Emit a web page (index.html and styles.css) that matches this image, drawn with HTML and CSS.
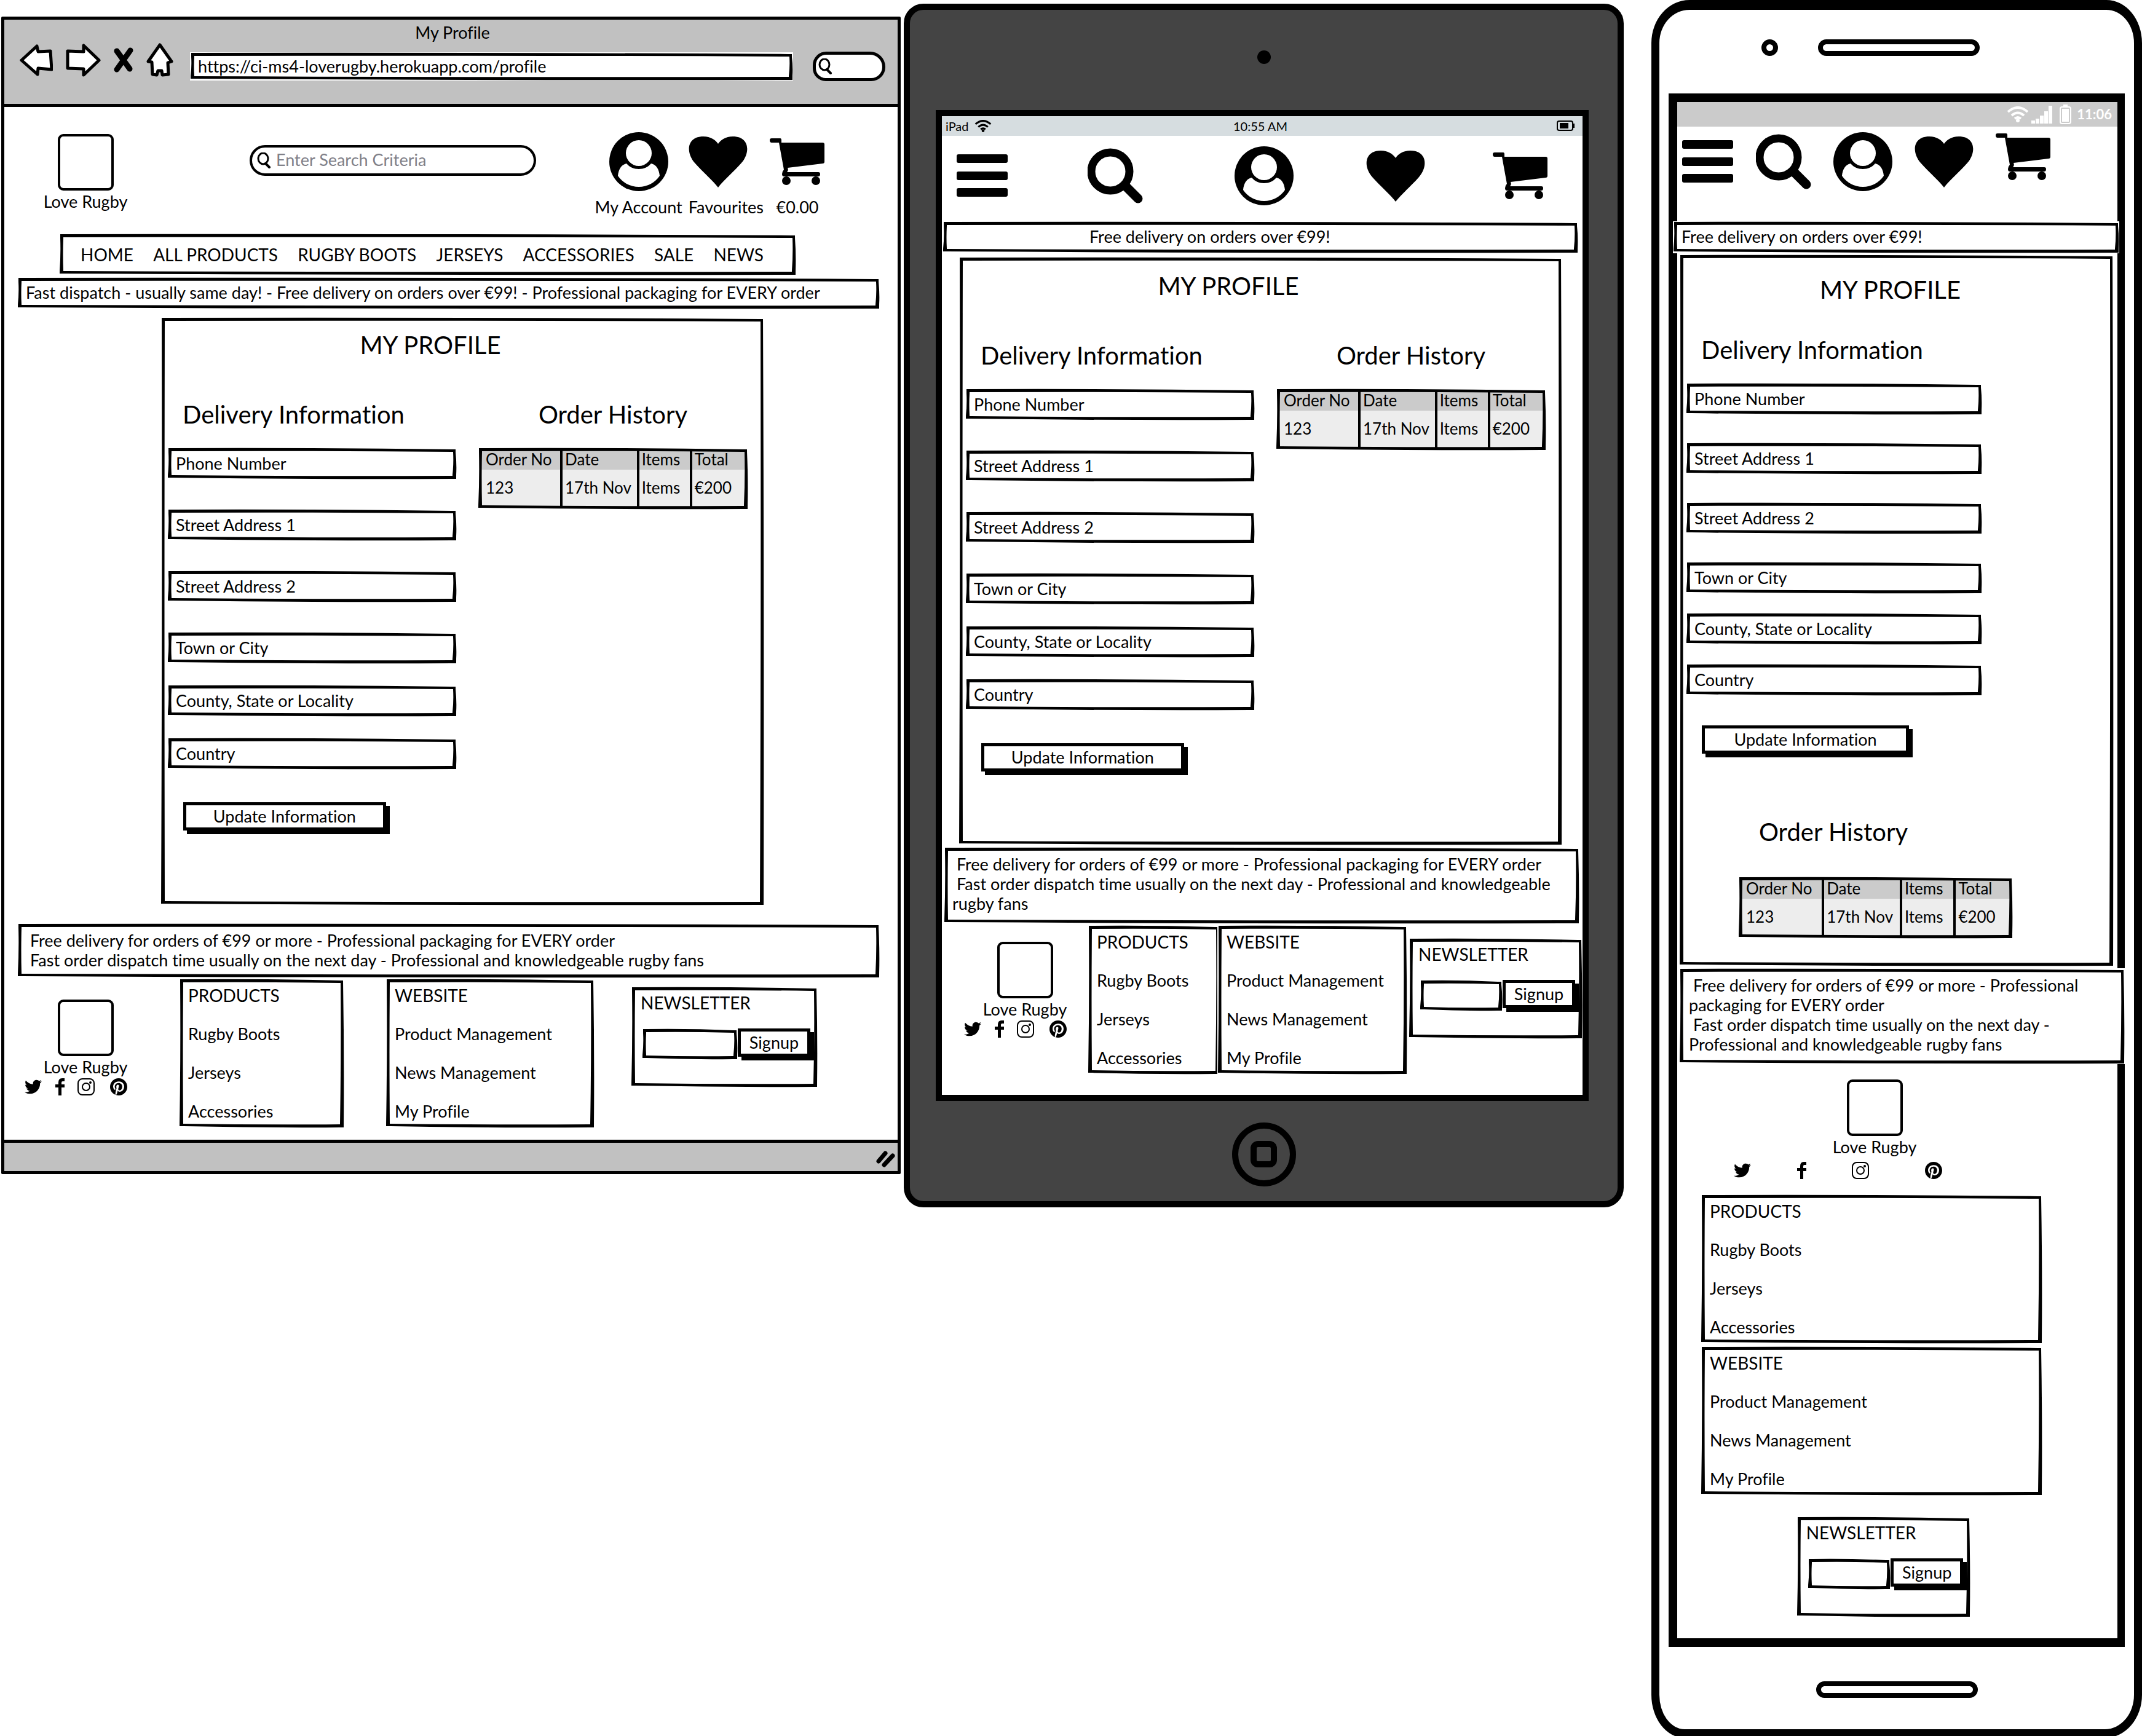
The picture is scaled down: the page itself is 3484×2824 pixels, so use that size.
FILE: index.html
```html
<!DOCTYPE html>
<html lang="en">
<head>
<meta charset="utf-8">
<title>Love Rugby - My Profile</title>
<link rel="stylesheet" href="styles.css">
</head>
<body>
<svg class="sprite" aria-hidden="true">
  <symbol id="i-account" viewBox="0 0 96 96"><circle cx="48" cy="48" r="48"/><circle cx="48" cy="34" r="21" fill="#fff"/><path fill="#fff" d="M28 51C19 53 15 61 14 71A41 41 0 0 0 82 71C81 61 77 53 68 51C63 57 56 60 48 60C40 60 33 57 28 51Z"/></symbol>
  <symbol id="i-heart" viewBox="0 0 96 83"><path d="M48 83C40 72 23 58 10 43C-5 26-3 0 24 0C36 0 44 6 48 12C52 6 60 0 72 0C99 0 101 26 86 43C73 58 56 72 48 83Z"/></symbol>
  <symbol id="i-cart" viewBox="0 0 90 76"><path d="M3 0H17Q19 0 19 3V7H86Q89 7 89 10V38Q89 41 86 41L29 48Q31 52 28 55H79Q82 55 82 58Q82 62 79 62H23Q20 62 20 58Q20 54 23 51L15 7H3Q0 7 0 3Q0 0 3 0Z"/><circle cx="27" cy="69" r="7"/><circle cx="75" cy="69" r="7"/></symbol>
  <symbol id="i-search" viewBox="0 0 90 90"><circle cx="37" cy="38" r="31" fill="none" stroke="#000" stroke-width="13"/><path d="M62 62L82 82" stroke="#000" stroke-width="15" stroke-linecap="round"/></symbol>
  <symbol id="i-menu" viewBox="0 0 84 70"><rect width="83" height="14" rx="3"/><rect y="28" width="83" height="14" rx="3"/><rect y="55" width="83" height="14" rx="3"/></symbol>
  <symbol id="i-find" viewBox="0 0 24 26"><ellipse cx="11" cy="10" rx="8" ry="9" fill="none" stroke="#000" stroke-width="3"/><path d="M15 18L21 24" stroke="#000" stroke-width="4" stroke-linecap="round"/></symbol>
  <symbol id="i-wifi" viewBox="0 0 36 26"><g fill="none" stroke="currentColor" stroke-width="4"><path d="M2 9Q18-5 34 9"/><path d="M8 15Q18 6 28 15"/><path d="M13 20Q18 16 23 20"/></g><circle cx="18" cy="23" r="3" fill="currentColor"/></symbol>
  <symbol id="i-twitter" viewBox="0 0 512 512"><path d="M459.37 151.716c.325 4.548.325 9.097.325 13.645 0 138.72-105.583 298.558-298.558 298.558-59.452 0-114.68-17.219-161.137-47.106 8.447.974 16.568 1.299 25.34 1.299 49.055 0 94.213-16.568 130.274-44.832-46.132-.975-84.792-31.188-98.112-72.772 6.498.974 12.995 1.624 19.818 1.624 9.421 0 18.843-1.3 27.614-3.573-48.081-9.747-84.143-51.98-84.143-102.985v-1.299c13.969 7.797 30.214 12.67 47.431 13.319-28.264-18.843-46.781-51.005-46.781-87.391 0-19.492 5.197-37.36 14.294-52.954 51.655 63.675 129.3 105.258 216.365 109.807-1.624-7.797-2.599-15.918-2.599-24.04 0-57.828 46.782-104.934 104.934-104.934 30.213 0 57.502 12.67 76.67 33.137 23.715-4.548 46.456-13.32 66.599-25.34-7.798 24.366-24.366 44.833-46.132 57.827 21.117-2.273 41.584-8.122 60.426-16.243-14.292 20.791-32.161 39.308-52.628 54.253z"/></symbol>
  <symbol id="i-facebook" viewBox="0 0 20 28"><path d="M13 28H8V15H3V10H8V7Q8 0 14 0H18V5H15Q13 5 13 7V10H18V15H13Z"/></symbol>
  <symbol id="i-instagram" viewBox="0 0 28 28"><g fill="none" stroke="#000" stroke-width="2"><rect x="1" y="1" width="26" height="26" rx="7"/><circle cx="14" cy="14" r="6"/></g><circle cx="21" cy="7" r="2"/></symbol>
  <symbol id="i-pinterest" viewBox="0 8 496 496"><path d="M496 256c0 137-111 248-248 248-25.6 0-50.2-3.9-73.4-11.1 10.1-16.5 25.2-43.5 30.8-65 3-11.6 15.4-59 15.4-59 8.1 15.4 31.7 28.5 56.8 28.5 74.8 0 128.7-68.8 128.7-154.3 0-81.9-66.9-143.2-152.9-143.2-107 0-163.9 71.8-163.9 150.1 0 36.4 19.4 81.7 50.3 96.1 4.7 2.2 7.2 1.2 8.3-3.3.8-3.4 5-20.3 6.9-28.1.6-2.5.3-4.7-1.7-7.1-10.1-12.5-18.3-35.3-18.3-56.6 0-54.7 41.4-107.6 112-107.6 60.9 0 103.6 41.5 103.6 100.9 0 67.1-33.9 113.6-78 113.6-24.3 0-42.6-20.1-36.7-44.8 7-29.5 20.5-61.3 20.5-82.6 0-19-10.2-34.9-31.4-34.9-24.9 0-44.9 25.7-44.9 60.2 0 22 7.4 36.8 7.4 36.8s-24.5 103.8-29 123.2c-5 21.4-3 51.6-.9 71.2C65.4 450.9 0 361.1 0 256 0 119 111 8 248 8s248 111 248 248z"/></symbol>
</svg>

<main class="board">

<!-- Desktop -->
<section class="browser">
  <header class="chrome">
    <div class="chrome-title">My Profile</div>
    <div class="toolbar">
      <div class="tools">
        <button type="button" aria-label="Back"><svg width="54" height="52" viewBox="0 0 54 52"><path class="arrow" d="M3 26L28 3L30 12L50 11L52 41L30 39L29 49Z"/></svg></button>
        <button type="button" aria-label="Forward"><svg width="58" height="54" viewBox="0 0 58 54"><path class="arrow" d="M55 27L30 3L30 13L4 12L4 40L30 41L30 51Z"/></svg></button>
        <button type="button" aria-label="Stop"><svg width="34" height="42" viewBox="0 0 34 42"><path d="M6 6L27 35M28 5L6 36" fill="none" stroke="#000" stroke-width="9" stroke-linecap="round"/></svg></button>
        <button type="button" aria-label="Home"><svg width="44" height="56" viewBox="0 0 44 56"><path class="arrow" d="M22 3L41 30L35 32L36 51L26 52L25 45L19 45L17 52L10 51L9 31L3 30Z"/></svg></button>
      </div>
      <input class="sketch url" type="text" aria-label="Address" value="https://ci-ms4-loverugby.herokuapp.com/profile">
      <div class="chrome-find"><svg width="24" height="26"><use href="#i-find"/></svg><input type="search" aria-label="Web search"></div>
    </div>
  </header>

  <div class="site-head">
    <a class="brand" href="#"><span class="logo"></span>Love Rugby</a>
    <label class="site-search"><svg width="24" height="26"><use href="#i-find"/></svg><input type="text" aria-label="Search" placeholder="Enter Search Criteria"></label>
    <div class="actions">
      <a href="#"><span class="pic"><svg width="96" height="96"><use href="#i-account"/></svg></span>My Account</a>
      <a class="to-left" href="#"><span class="pic"><svg width="96" height="83"><use href="#i-heart"/></svg></span>Favourites</a>
      <a href="#"><span class="pic"><svg width="90" height="76"><use href="#i-cart"/></svg></span>€0.00</a>
    </div>
  </div>

  <nav class="sketch nav">
    <a href="#">HOME</a><a href="#">ALL PRODUCTS</a><a href="#">RUGBY BOOTS</a><a href="#">JERSEYS</a><a href="#">ACCESSORIES</a><a href="#">SALE</a><a href="#">NEWS</a>
  </nav>
  <div class="sketch banner">Fast dispatch - usually same day! - Free delivery on orders over €99! - Professional packaging for EVERY order</div>

  <div class="sketch profile">
    <h1>MY PROFILE</h1>
    <div class="columns">
      <form class="delivery">
        <h2>Delivery Information</h2>
        <div class="fields">
          <input class="sketch" type="text" aria-label="Phone Number" placeholder="Phone Number">
          <input class="sketch" type="text" aria-label="Street Address 1" placeholder="Street Address 1">
          <input class="sketch" type="text" aria-label="Street Address 2" placeholder="Street Address 2">
          <input class="sketch" type="text" aria-label="Town or City" placeholder="Town or City">
          <input class="sketch" type="text" aria-label="County, State or Locality" placeholder="County, State or Locality">
          <input class="sketch" type="text" aria-label="Country" placeholder="Country">
        </div>
        <button class="press update" type="button">Update Information</button>
      </form>
      <div class="history">
        <h2>Order History</h2>
        <table class="sketch">
          <thead><tr><th class="c1">Order No</th><th class="c2">Date</th><th class="c3">Items</th><th>Total</th></tr></thead>
          <tbody><tr><td>123</td><td>17th Nov</td><td>Items</td><td>€200</td></tr></tbody>
        </table>
      </div>
    </div>
  </div>

  <div class="sketch promo"> Free delivery for orders of €99 or more - Professional packaging for EVERY order
 Fast order dispatch time usually on the next day - Professional and knowledgeable rugby fans</div>

  <footer class="foot">
    <div class="foot-brand">
      <a class="brand" href="#"><span class="logo"></span>Love Rugby</a>
      <div class="social">
        <a href="#" aria-label="Twitter"><svg width="28" height="28"><use href="#i-twitter"/></svg></a>
        <a href="#" aria-label="Facebook"><svg width="20" height="28"><use href="#i-facebook"/></svg></a>
        <a href="#" aria-label="Instagram"><svg width="28" height="28"><use href="#i-instagram"/></svg></a>
        <a href="#" aria-label="Pinterest"><svg width="28" height="28"><use href="#i-pinterest"/></svg></a>
      </div>
    </div>
    <div class="sketch links products"><h3>PRODUCTS</h3><a href="#">Rugby Boots</a><a href="#">Jerseys</a><a href="#">Accessories</a></div>
    <div class="sketch links website"><h3>WEBSITE</h3><a href="#">Product Management</a><a href="#">News Management</a><a href="#">My Profile</a></div>
    <form class="sketch newsletter"><h3>NEWSLETTER</h3><div class="signup"><input class="sketch" type="email" aria-label="Newsletter email"><button class="press" type="button">Signup</button></div></form>
  </footer>
  <div class="statusbar"><svg width="32" height="28" viewBox="0 0 32 28"><path d="M5 18L16 5M14 24L28 9" stroke="#000" stroke-width="7" stroke-linecap="round"/></svg></div>
</section>

<!-- Tablet -->
<section class="tablet">
  <div class="tablet-top"><span class="camera"></span></div>
  <div class="tablet-screen">
    <div class="tablet-status">
      <span class="carrier">iPad <svg width="28" height="20"><use href="#i-wifi"/></svg></span>
      <span>10:55 AM</span>
      <svg class="battery" width="30" height="18" viewBox="0 0 30 18"><rect x="1" y="1" width="25" height="15" rx="3" fill="none" stroke="#000" stroke-width="2"/><rect x="5" y="4" width="14" height="9"/><path d="M28 5V12" stroke="#000" stroke-width="2"/></svg>
    </div>
    <nav class="icons">
      <a href="#" aria-label="Menu"><svg width="84" height="70"><use href="#i-menu"/></svg></a>
      <a href="#" aria-label="Search"><svg width="90" height="90"><use href="#i-search"/></svg></a>
      <a href="#" aria-label="My Account"><svg width="96" height="96"><use href="#i-account"/></svg></a>
      <a href="#" aria-label="Favourites"><svg width="96" height="83"><use href="#i-heart"/></svg></a>
      <a href="#" aria-label="Basket"><svg width="90" height="76"><use href="#i-cart"/></svg></a>
    </nav>
    <div class="sketch banner">Free delivery on orders over €99!</div>

    <div class="sketch profile">
      <h1>MY PROFILE</h1>
      <div class="columns">
        <form class="delivery">
          <h2>Delivery Information</h2>
          <div class="fields">
            <input class="sketch" type="text" aria-label="Phone Number" placeholder="Phone Number">
            <input class="sketch" type="text" aria-label="Street Address 1" placeholder="Street Address 1">
            <input class="sketch" type="text" aria-label="Street Address 2" placeholder="Street Address 2">
            <input class="sketch" type="text" aria-label="Town or City" placeholder="Town or City">
            <input class="sketch" type="text" aria-label="County, State or Locality" placeholder="County, State or Locality">
            <input class="sketch" type="text" aria-label="Country" placeholder="Country">
          </div>
          <button class="press update" type="button">Update Information</button>
        </form>
        <div class="history">
          <h2>Order History</h2>
          <table class="sketch">
            <thead><tr><th class="c1">Order No</th><th class="c2">Date</th><th class="c3">Items</th><th>Total</th></tr></thead>
            <tbody><tr><td>123</td><td>17th Nov</td><td>Items</td><td>€200</td></tr></tbody>
          </table>
        </div>
      </div>
    </div>

    <div class="sketch promo"> Free delivery for orders of €99 or more - Professional packaging for EVERY order
 Fast order dispatch time usually on the next day - Professional and knowledgeable rugby fans</div>

    <footer class="foot">
      <div class="foot-brand">
        <a class="brand" href="#"><span class="logo"></span>Love Rugby</a>
        <div class="social">
          <a href="#" aria-label="Twitter"><svg width="28" height="28"><use href="#i-twitter"/></svg></a>
          <a href="#" aria-label="Facebook"><svg width="20" height="28"><use href="#i-facebook"/></svg></a>
          <a href="#" aria-label="Instagram"><svg width="28" height="28"><use href="#i-instagram"/></svg></a>
          <a href="#" aria-label="Pinterest"><svg width="28" height="28"><use href="#i-pinterest"/></svg></a>
        </div>
      </div>
      <div class="sketch links products"><h3>PRODUCTS</h3><a href="#">Rugby Boots</a><a href="#">Jerseys</a><a href="#">Accessories</a></div>
      <div class="sketch links website"><h3>WEBSITE</h3><a href="#">Product Management</a><a href="#">News Management</a><a href="#">My Profile</a></div>
      <form class="sketch newsletter"><h3>NEWSLETTER</h3><div class="signup"><input class="sketch" type="email" aria-label="Newsletter email"><button class="press" type="button">Signup</button></div></form>
    </footer>
  </div>
  <div class="tablet-bottom"><button class="home" type="button" aria-label="Home"><span></span></button></div>
</section>

<!-- Phone -->
<section class="phone">
  <div class="phone-top"><span class="lens"></span><span class="speaker"></span></div>
  <div class="phone-screen">
    <div class="phone-status">
      <svg width="36" height="26"><use href="#i-wifi"/></svg>
      <svg width="34" height="30" viewBox="0 0 34 30" fill="#fff"><path d="M0 25h6v5H0zM7 22h6v8H7zM14 17h6v13h-6zM21 10h6v20h-6zM28 1h6v29h-6z"/></svg>
      <svg class="cell" width="20" height="32" viewBox="0 0 20 32"><rect x="1" y="4" width="17" height="27" rx="3" fill="none" stroke="#fff" stroke-width="2"/><rect x="4" y="7" width="11" height="21" fill="#fff"/><rect x="6" width="7" height="4" fill="#fff"/></svg>
      <span>11:06</span>
    </div>
    <nav class="icons">
      <a href="#" aria-label="Menu"><svg width="84" height="70"><use href="#i-menu"/></svg></a>
      <a href="#" aria-label="Search"><svg width="90" height="90"><use href="#i-search"/></svg></a>
      <a href="#" aria-label="My Account"><svg width="96" height="96"><use href="#i-account"/></svg></a>
      <a href="#" aria-label="Favourites"><svg width="96" height="83"><use href="#i-heart"/></svg></a>
      <a class="raised" href="#" aria-label="Basket"><svg width="90" height="76"><use href="#i-cart"/></svg></a>
    </nav>
    <div class="sketch banner">Free delivery on orders over €99!</div>

    <div class="sketch profile">
      <h1>MY PROFILE</h1>
      <div class="columns">
        <form class="delivery">
          <h2>Delivery Information</h2>
          <div class="fields">
            <input class="sketch" type="text" aria-label="Phone Number" placeholder="Phone Number">
            <input class="sketch" type="text" aria-label="Street Address 1" placeholder="Street Address 1">
            <input class="sketch" type="text" aria-label="Street Address 2" placeholder="Street Address 2">
            <input class="sketch" type="text" aria-label="Town or City" placeholder="Town or City">
            <input class="sketch" type="text" aria-label="County, State or Locality" placeholder="County, State or Locality">
            <input class="sketch" type="text" aria-label="Country" placeholder="Country">
          </div>
          <button class="press update" type="button">Update Information</button>
        </form>
        <div class="history">
          <h2>Order History</h2>
          <table class="sketch">
            <thead><tr><th class="c1">Order No</th><th class="c2">Date</th><th class="c3">Items</th><th>Total</th></tr></thead>
            <tbody><tr><td>123</td><td>17th Nov</td><td>Items</td><td>€200</td></tr></tbody>
          </table>
        </div>
      </div>
    </div>

    <div class="sketch promo"> Free delivery for orders of €99 or more - Professional packaging for EVERY order
 Fast order dispatch time usually on the next day - Professional and knowledgeable rugby fans</div>

    <footer class="foot">
      <div class="foot-brand">
        <a class="brand" href="#"><span class="logo"></span>Love Rugby</a>
        <div class="social">
          <a href="#" aria-label="Twitter"><svg width="28" height="28"><use href="#i-twitter"/></svg></a>
          <a href="#" aria-label="Facebook"><svg width="20" height="28"><use href="#i-facebook"/></svg></a>
          <a href="#" aria-label="Instagram"><svg width="28" height="28"><use href="#i-instagram"/></svg></a>
          <a href="#" aria-label="Pinterest"><svg width="28" height="28"><use href="#i-pinterest"/></svg></a>
        </div>
      </div>
      <div class="sketch links products"><h3>PRODUCTS</h3><a href="#">Rugby Boots</a><a href="#">Jerseys</a><a href="#">Accessories</a></div>
      <div class="sketch links website"><h3>WEBSITE</h3><a href="#">Product Management</a><a href="#">News Management</a><a href="#">My Profile</a></div>
      <form class="sketch newsletter"><h3>NEWSLETTER</h3><div class="signup"><input class="sketch" type="email" aria-label="Newsletter email"><button class="press" type="button">Signup</button></div></form>
    </footer>
  </div>
  <div class="phone-bottom"><span class="speaker"></span></div>
</section>

</main>
</body>
</html>
```
FILE: styles.css
```css
* { box-sizing: border-box; }

body {
  margin: 0;
  background: #fff;
  color: #000;
  font: 27px/32px Lato, "Liberation Sans", sans-serif;
  font-variant-ligatures: none;
}

a { color: inherit; text-decoration: none; }
h1, h2, h3 { margin: 0; font-weight: 400; }
h1, h2 { font-size: 40px; line-height: 48px; }
h3 { font-size: 28px; line-height: 32px; }
svg { display: block; flex: none; }
.sprite { position: absolute; width: 0; height: 0; }

input, button {
  min-width: 0;
  margin: 0;
  padding: 0;
  border: 0;
  background: none;
  color: inherit;
  font: inherit;
}
input::placeholder { color: #000; opacity: 1; }

/* Hand-drawn outline shared by boxes, fields and tables */
.sketch {
  border: 8px solid #000;
  border-image: url("data:image/svg+xml,%3Csvg xmlns='http://www.w3.org/2000/svg' width='400' height='400'%3E%3Cpath fill-rule='evenodd' d='M2 1Q200 0 398 3Q400 200 399 399Q200 400 1 397Q3 200 2 1ZM7 6Q200 5 394 7Q395 200 393 394Q200 395 7 393Q6 200 7 6Z'/%3E%3C/svg%3E") 8 / 8px stretch;
  background: #fff;
}

.board {
  display: grid;
  grid-template-columns: 1463fr 1171fr 838fr;
  column-gap: 5px;
  align-items: start;
  padding-left: 2px;
}
.board > *, .columns > *, .foot > *, .tablet .icons > * { min-width: 0; }

/* ---------- Shared page parts ---------- */
.logo {
  display: block;
  width: 91px;
  height: 92px;
  border: 4px solid #000;
  border-radius: 9px;
}
.brand {
  display: flex;
  flex: none;
  flex-direction: column;
  align-items: center;
  gap: 2px;
  white-space: nowrap;
}

.banner { height: 52px; padding: 0 6px; line-height: 33px; white-space: nowrap; }

.profile { padding-top: 13px; }
.profile h1 { padding-right: 104px; text-align: center; }
.columns {
  display: grid;
  grid-template-columns: 471fr 440fr;
  column-gap: 34px;
  margin-top: 65px;
  padding: 0 18px 0 3px;
}
.delivery h2 { padding-left: 25px; }
.history h2 { text-align: center; }
.fields { display: grid; row-gap: 48px; margin-top: 30px; }
.fields input { width: 100%; height: 52px; padding: 0 6px 2px; }
.fields input:nth-child(n+5) { margin-top: -14px; }
.press { border: 5px solid #000; background: #fff; box-shadow: 6px 6px 0 #000; text-align: center; line-height: 34px; }
.update { display: block; width: 70%; height: 46px; margin: 53px 0 0 26px; }

table.sketch {
  width: 100%;
  height: 101px;
  margin-top: 30px;
  border-width: 5px;
  border-collapse: separate;
  border-spacing: 0;
  table-layout: fixed;
  background: linear-gradient(#cbcbcb 32px, #ededed 32px) 4px 4px / calc(100% - 8px) calc(100% - 8px) no-repeat border-box;
}
th, td { padding: 0 0 0 4px; border-left: 4px solid #000; text-align: left; font-size: 26px; font-weight: 400; white-space: nowrap; }
th:first-child, td:first-child { padding-left: 8px; border-left: 0; }
th { height: 31px; padding: 3px 0 6px 4px; line-height: 22px; }
td { height: 60px; padding-bottom: 3px; }
.c1 { width: 30%; }
.c2 { width: 29%; }
.c3 { width: 20%; }

.promo { padding: 4px 6px 5px; white-space: pre-wrap; }

.foot { display: grid; align-items: start; }
.foot-brand .brand { width: 198px; }
.social { display: flex; gap: 19px; margin-top: 2px; }
.social a:last-child { margin-left: 6px; }
.links { display: flex; flex-direction: column; gap: 31px; padding: 3px 7px; white-space: nowrap; }
.newsletter { height: 164px; padding: 2px 4px 0 8px; }
.signup { display: flex; margin-top: 26px; padding-left: 2px; }
.signup input { flex: 1; height: 51px; }
.signup button { width: 118px; height: 46px; }

/* ---------- Desktop browser ---------- */
.browser { margin-top: 27px; border: 5px solid #000; border-radius: 2px; }
.chrome { padding: 5px 20px 22px 25px; border-bottom: 5px solid #000; background: #c1c1c1; }
.chrome-title { text-align: center; }
.toolbar { display: flex; align-items: center; height: 78px; }
.tools { display: flex; align-items: center; gap: 20px; padding-bottom: 20px; }
.arrow { fill: #fff; stroke: #000; stroke-width: 5; stroke-linejoin: round; }
.url { flex: 1; height: 46px; margin: 0 32px 0 27px; padding: 0 5px 2px; }
.chrome-find {
  display: flex;
  align-items: center;
  width: 118px;
  height: 48px;
  padding-left: 3px;
  border: 5px solid #000;
  border-radius: 44px 50px 46px 42px;
  background: #fff;
}
.chrome-find input { width: 60px; }

.site-head { display: flex; align-items: flex-start; height: 206px; padding: 41px 118px 0 64px; }
.site-head .brand { width: 136px; padding-top: 3px; }
.site-search {
  display: flex;
  align-items: center;
  gap: 8px;
  width: 32%;
  max-width: 466px;
  min-width: 0;
  height: 50px;
  margin: 21px auto 0 199px;
  padding-left: 7px;
  border: 4px solid #000;
  border-radius: 26px;
}
.site-head .site-search { flex: 0 0 466px; }
.site-search input { flex: 1; padding-bottom: 2px; }
.site-search input::placeholder { color: #808088; }
.actions { display: flex; gap: 10px; white-space: nowrap; }
.actions a { display: flex; flex-direction: column; align-items: center; gap: 10px; }
.actions .to-left { align-items: flex-start; }
.pic { display: flex; align-items: center; height: 96px; }

.nav { display: flex; justify-content: space-between; margin: 0 165px 0 89px; padding: 0 45px 0 27px; font-size: 28px; line-height: 52px; white-space: nowrap; }
.browser .banner { margin: 3px 29px 0 21px; }
.browser .profile { min-height: 957px; margin: 13px 217px 0 254px; }
.browser .promo { margin: 29px 29px 0 21px; }
.browser .foot { grid-template-columns: 225fr 269fr 348fr 304fr; column-gap: 59px; padding: 1px 130px 19px 0; }
.browser .foot-brand { padding: 34px 0 0 33px; }
.browser .website { margin-left: 8px; }
.browser .newsletter { margin-top: 13px; }
.statusbar { display: flex; justify-content: flex-end; align-items: center; height: 51px; padding: 6px 4px 0; border-top: 5px solid #000; background: #c1c1c1; }

/* ---------- Tablet ---------- */
.tablet { margin-top: 6px; border: 10px solid #000; border-radius: 32px; background: #444; }
.tablet-top { display: flex; align-items: center; justify-content: center; height: 163px; padding-bottom: 10px; }
.camera { width: 22px; height: 22px; border-radius: 50%; background: #000; }
.tablet-screen { margin: 0 47px 0 42px; padding-bottom: 33px; border: 10px solid #000; background: #fff; }
.tablet-status { display: grid; grid-template-columns: 1fr auto 1fr; align-items: center; height: 32px; padding: 0 12px 0 6px; background: #d6dde0; font-size: 20px; line-height: 28px; }
.carrier { display: flex; align-items: center; gap: 10px; }
.battery { justify-self: end; }
.icons { align-items: center; }
.icons a { display: flex; align-items: center; height: 96px; }
.tablet .icons { display: grid; grid-template-columns: 131fr 301fr 184fr 244fr 162fr 20fr; height: 139px; padding-bottom: 9px; }
.tablet .icons a { justify-content: center; }
.tablet .banner { margin: 0 7px 0 1px; padding-left: 231px; }
.tablet .profile { min-height: 957px; margin: 6px 33px 0 27px; padding-top: 15px; }
.tablet .promo { margin: 3px 5px 0 3px; padding-bottom: 9px; }
.tablet .foot { grid-template-columns: 237fr 211fr 311fr 283fr; padding-top: 2px; }
.tablet .foot-brand { padding: 27px 0 0 36px; }
.tablet .products { margin-right: -4px; }
.tablet .website { margin-right: 2px; }
.tablet .newsletter { margin-top: 21px; }
.tablet-bottom { display: flex; align-items: center; justify-content: center; height: 163px; padding-top: 10px; }
.home { display: flex; align-items: center; justify-content: center; width: 104px; height: 104px; border: 10px solid #000; border-radius: 50%; }
.home span { width: 43px; height: 43px; border: 10px solid #000; border-radius: 12px; }

/* ---------- Phone ---------- */
.phone { margin-left: 40px; border: 14px solid #000; border-width: 16px 13px 14px; border-radius: 62px 58px 60px 54px / 70px; }
.phone-top { display: flex; align-items: center; gap: 65px; height: 136px; padding: 0 0 14px 166px; }
.phone-bottom { display: flex; align-items: center; justify-content: center; height: 134px; padding-top: 4px; }
.lens { width: 27px; height: 27px; border: 8px solid #000; border-radius: 50%; }
.speaker { width: 263px; height: 27px; border: 8px solid #000; border-radius: 14px; }
.phone-screen { margin: 0 15px; padding-bottom: 34px; border: 14px solid #000; border-right-width: 12px; }
.phone-status { display: flex; align-items: center; justify-content: flex-end; height: 40px; padding-right: 9px; background: #cbcbcb; color: #fff; }
.phone-status svg { margin-right: 4px; }
.phone-status .cell { margin: 0 8px; }
.phone-status span { font-size: 22px; font-weight: 700; }
.phone .icons { display: flex; align-items: flex-start; gap: 36px; height: 154px; padding: 9px 0 0 8px; }
.phone .icons .raised { height: 80px; }
.phone .banner { margin: 0 -3px 0 -7px; }
.phone .profile { margin: 2px 6px 0 3px; padding: 25px 0 37px; }
.phone .profile h1 { padding-right: 20px; }
.phone .columns { grid-template-columns: 1fr; margin-top: 50px; padding-right: 0; }
.phone .delivery { width: 70%; }
.phone .fields { row-gap: 45px; }
.phone .update { margin-top: 48px; }
.phone .history { width: 65%; margin: 103px 0 0 85px; }
.phone .history h2 { padding-left: 34px; text-align: left; }
.phone .history table { margin-top: 49px; }
.phone .promo { margin: 3px -12px 0 3px; padding: 4px 8px 8px; }
.phone .foot { display: block; padding: 25px 122px 0 38px; }
.phone .foot-brand { padding-left: 54px; }
.phone .foot-brand .brand { width: 458px; }
.phone .social { gap: 72px; margin-top: 8px; }
.phone .social a:last-child { margin-left: 19px; }
.phone .products { margin-top: 25px; }
.phone .website { margin-top: 4px; }
.phone .newsletter { width: 51%; margin: 34px auto 0 28%; }
```
